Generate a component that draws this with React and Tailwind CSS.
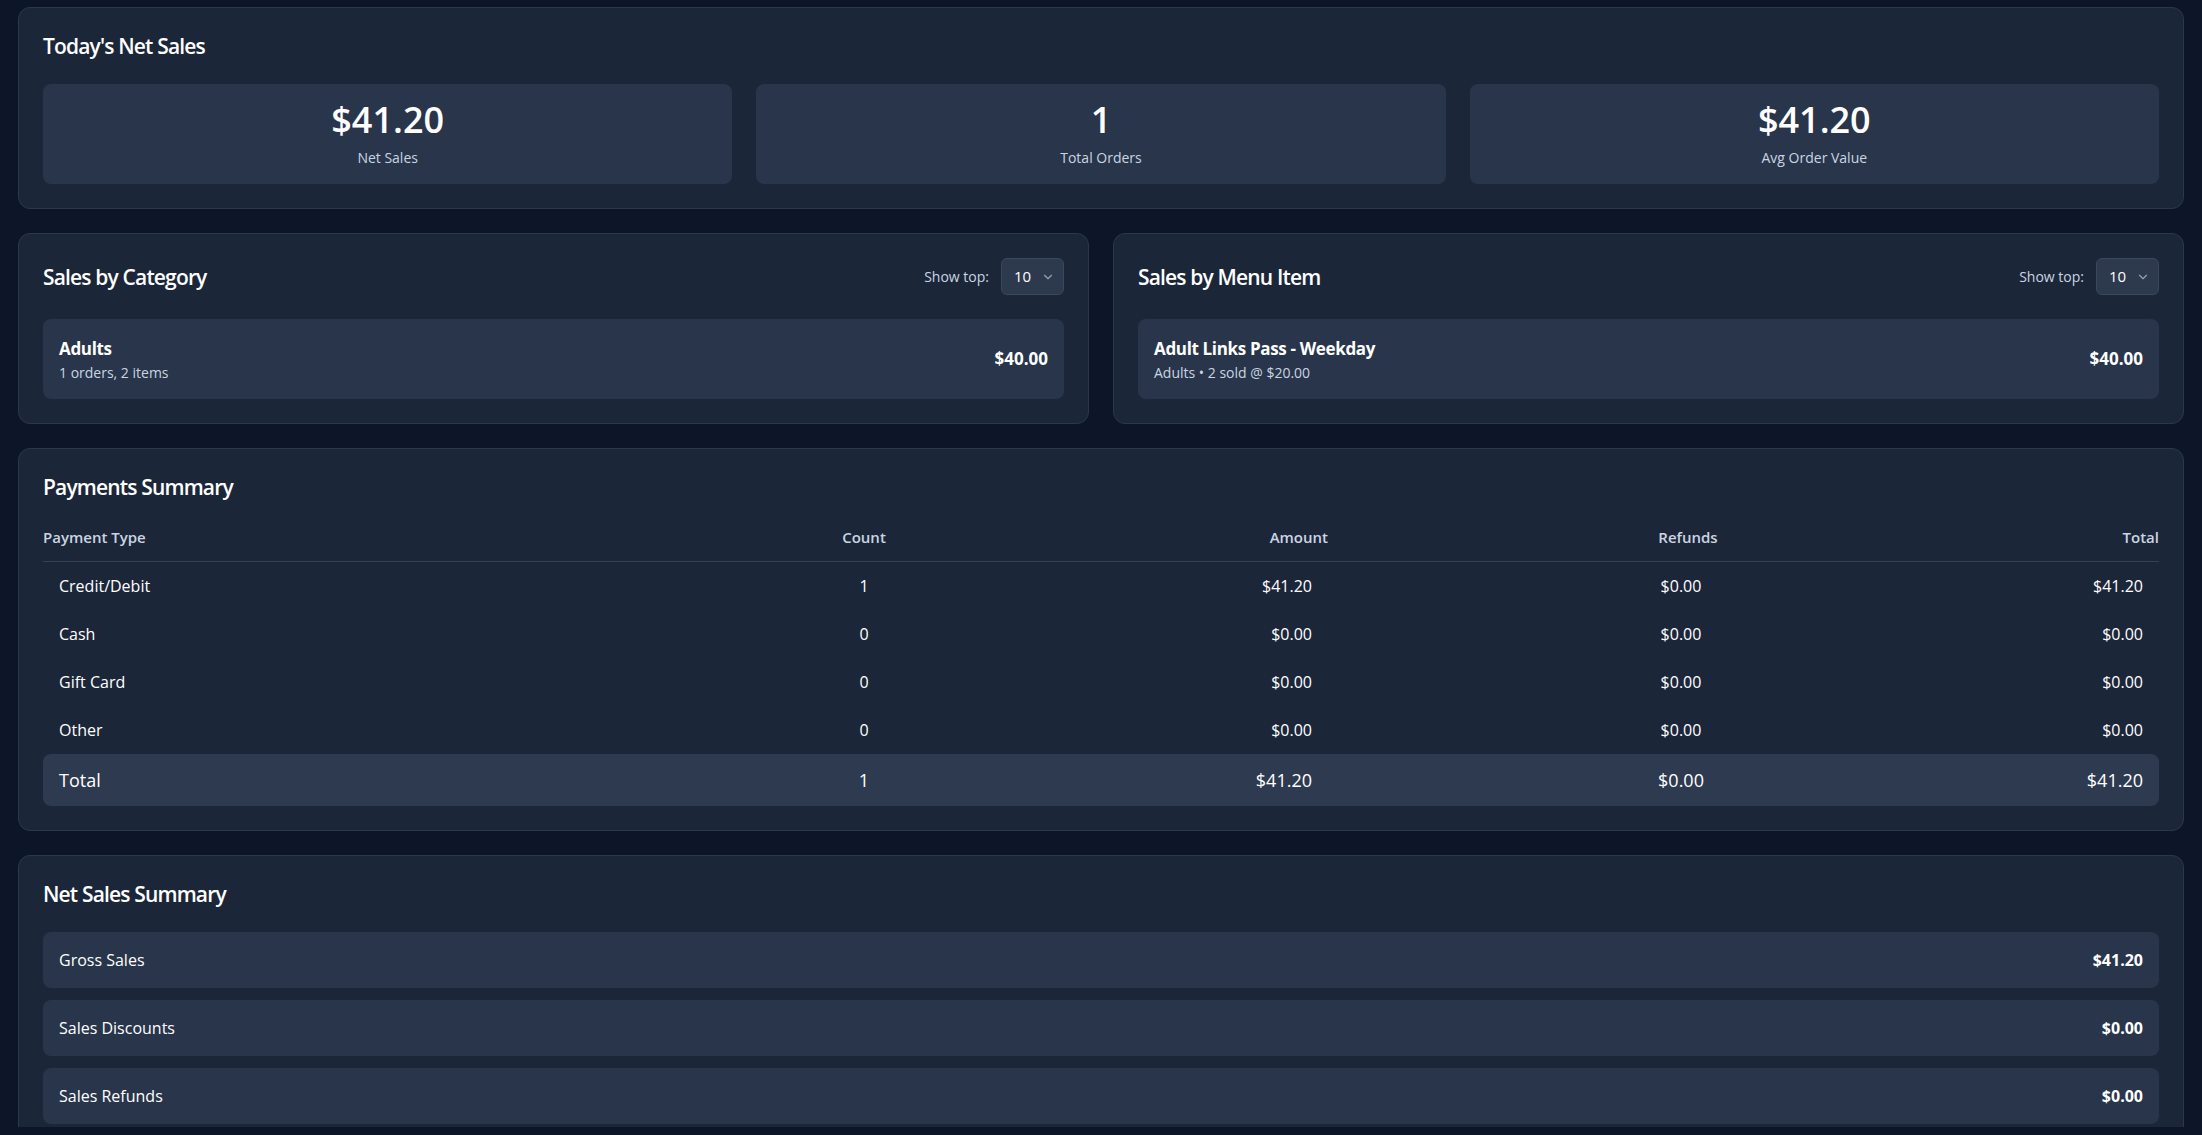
import React from 'react';
import { ChevronDown } from 'lucide-react';

const font = { fontFamily: '"Open Sans", "Noto Sans", sans-serif' };

function Card({ children }) {
  return (
    <section className="rounded-xl border border-[#2b374b] bg-[#1c2639] p-6">
      {children}
    </section>
  );
}

function Title({ children }) {
  return <h2 className="text-[21px] font-semibold leading-7 tracking-[-0.04em] text-white">{children}</h2>;
}

function Stat({ value, label }) {
  return (
    <div className="flex h-[100px] flex-col items-center justify-center rounded-lg bg-[#28354a]">
      <div className="text-[36px] font-semibold leading-10 text-white">{value}</div>
      <div className="mt-2 text-[14px] leading-5 text-slate-300">{label}</div>
    </div>
  );
}

function ShowTop() {
  return (
    <div className="flex items-center gap-3">
      <span className="text-[14px] text-slate-300">Show top:</span>
      <button className="flex h-[37px] w-[63px] items-center gap-2.5 rounded-md border border-[#3a475c] bg-[#2d394d] pl-3 text-[15px] font-medium text-white">
        10
        <ChevronDown className="h-3.5 w-3.5 text-slate-400" strokeWidth={2} />
      </button>
    </div>
  );
}

function ItemRow({ name, sub, value }) {
  return (
    <div className="flex h-[80px] items-center justify-between rounded-lg bg-[#28354a] px-4">
      <div className="pt-0.5">
        <div className="text-[17px] font-bold leading-6 tracking-[-0.02em] text-white">{name}</div>
        <div className="mt-0.5 text-[14px] leading-5 text-slate-300">{sub}</div>
      </div>
      <div className="text-[17px] font-bold text-white">{value}</div>
    </div>
  );
}

const cols = 'grid grid-cols-[601px_440px_244px_720px_1fr]';

const payments = [
  ['Credit/Debit', '1', '$41.20', '$0.00', '$41.20'],
  ['Cash', '0', '$0.00', '$0.00', '$0.00'],
  ['Gift Card', '0', '$0.00', '$0.00', '$0.00'],
  ['Other', '0', '$0.00', '$0.00', '$0.00'],
];

function SummaryRow({ label, value }) {
  return (
    <div className="flex h-[56px] items-center justify-between rounded-lg bg-[#28354a] px-4">
      <span className="text-[16px] text-white">{label}</span>
      <span className="text-[16px] font-bold text-white">{value}</span>
    </div>
  );
}

export default function App() {
  return (
    <div className="h-[1135px] bg-[#0d1629]" style={font}>
      <div className="h-[1127px] overflow-hidden px-[18px] pt-[7px]">
        <div className="flex flex-col gap-6">
          {/* Today's net sales */}
          <Card>
            <Title>Today's Net Sales</Title>
            <div className="mt-6 grid grid-cols-3 gap-6">
              <Stat value="$41.20" label="Net Sales" />
              <Stat value="1" label="Total Orders" />
              <Stat value="$41.20" label="Avg Order Value" />
            </div>
          </Card>

          {/* Category / menu item */}
          <div className="grid grid-cols-2 gap-6">
            <Card>
              <div className="flex items-center justify-between">
                <Title>Sales by Category</Title>
                <ShowTop />
              </div>
              <div className="mt-6">
                <ItemRow name="Adults" sub="1 orders, 2 items" value="$40.00" />
              </div>
            </Card>
            <Card>
              <div className="flex items-center justify-between">
                <Title>Sales by Menu Item</Title>
                <ShowTop />
              </div>
              <div className="mt-6">
                <ItemRow name="Adult Links Pass - Weekday" sub="Adults • 2 sold @ $20.00" value="$40.00" />
              </div>
            </Card>
          </div>

          {/* Payments */}
          <Card>
            <Title>Payments Summary</Title>
            <div className="mt-6">
              <div className={`${cols} border-b border-[#334155] pb-3.5 pt-0.5 text-[15px] font-semibold leading-5 text-slate-300`}>
                <div>Payment Type</div>
                <div className="text-center">Count</div>
                <div className="text-right">Amount</div>
                <div className="text-center">Refunds</div>
                <div className="text-right">Total</div>
              </div>
              {payments.map((r) => (
                <div key={r[0]} className={`${cols} h-12 items-center text-[16px] text-white`}>
                  <div className="px-4">{r[0]}</div>
                  <div className="px-4 text-center">{r[1]}</div>
                  <div className="px-4 text-right">{r[2]}</div>
                  <div className="pl-4 pr-[30px] text-center">{r[3]}</div>
                  <div className="px-4 text-right">{r[4]}</div>
                </div>
              ))}
              <div className={`${cols} h-[52px] items-center rounded-lg bg-[#2e3a4f] text-[18px] font-medium text-white`}>
                <div className="px-4">Total</div>
                <div className="px-4 text-center">1</div>
                <div className="px-4 text-right">$41.20</div>
                <div className="pl-4 pr-[30px] text-center">$0.00</div>
                <div className="px-4 text-right">$41.20</div>
              </div>
            </div>
          </Card>

          {/* Net sales summary */}
          <Card>
            <Title>Net Sales Summary</Title>
            <div className="mt-6 flex flex-col gap-3">
              <SummaryRow label="Gross Sales" value="$41.20" />
              <SummaryRow label="Sales Discounts" value="$0.00" />
              <SummaryRow label="Sales Refunds" value="$0.00" />
            </div>
          </Card>
        </div>
      </div>
    </div>
  );
}
